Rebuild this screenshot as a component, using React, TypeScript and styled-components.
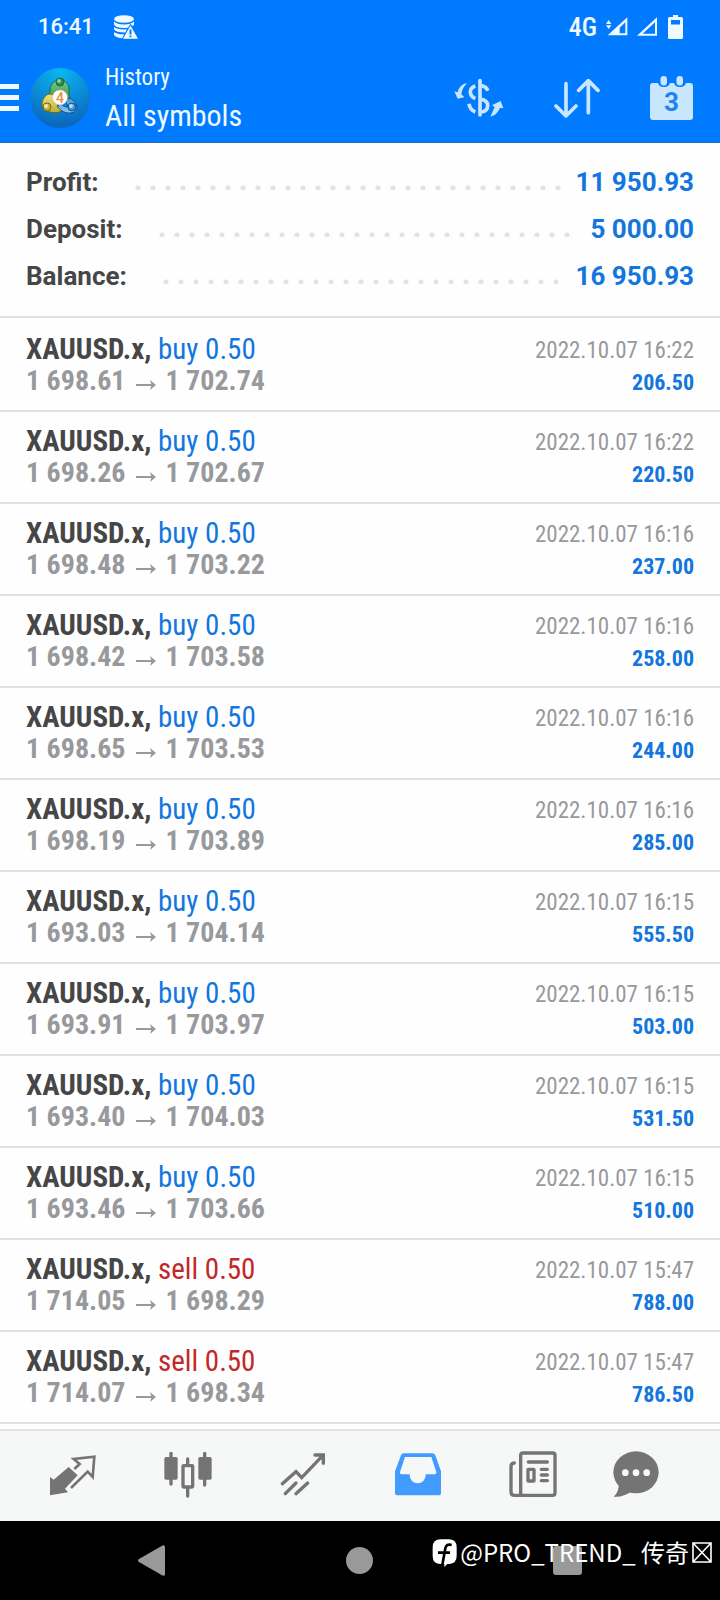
import React from 'react';
import styled, { createGlobalStyle } from 'styled-components';

const Global = createGlobalStyle`
  * { box-sizing: border-box; }
  body { margin: 0; background: #fff; font-family: 'Roboto', sans-serif; }
`;
const condensed = `'Roboto Condensed', 'Liberation Sans Narrow', Roboto, sans-serif`;

const Screen = styled.div`
  min-height: 100vh;
  display: flex;
  flex-direction: column;
  background: #fefefe;
`;

/* ---------- header ---------- */
const Header = styled.header`
  background: #007aff;
  color: #eefaff;
  border-bottom: 1px solid #1a6cc4;
`;
const StatusBar = styled.div`
  display: flex;
  align-items: center;
  height: 54px;
  padding: 0 37px 0 38px;
`;
const Clock = styled.time`
  font-size: 22px;
  font-weight: 500;
  line-height: 28px;
`;
const StatusIcon = styled.svg`
  display: block;
  flex: none;
`;
const StatusLeft = styled.div`
  display: flex;
  align-items: center;
  gap: 20px;
  flex: 1;
`;
const StatusRight = styled.div`
  display: flex;
  align-items: center;
  gap: 9px;
`;
const Network = styled.span`
  font-family: ${condensed};
  font-size: 26px;
  font-weight: 500;
  line-height: 28px;
`;
const TopBar = styled.div`
  display: flex;
  align-items: center;
  height: 88px;
  padding-right: 26px;
`;
const IconButton = styled.button`
  display: block;
  flex: none;
  padding: 0;
  border: 0;
  background: none;
  color: inherit;
  line-height: 0;
`;
const Logo = styled.svg`
  display: block;
  flex: none;
  margin: 0 15px 0 11px;
`;
const Titles = styled.div`
  flex: 1;
  font-family: ${condensed};
`;
const Kicker = styled.div`
  font-size: 23px;
  line-height: 36px;
`;
const Title = styled.h1`
  margin: 0;
  font-size: 30px;
  font-weight: 400;
  line-height: 40px;
`;
const Actions = styled.div`
  display: flex;
  align-items: center;
  gap: 50px;
  color: #c9e6ff;
`;

/* ---------- summary ---------- */
const Summary = styled.dl`
  margin: 0;
  padding: 15px 26px 17px;
  border-bottom: 2px solid #e2e2e2;
`;
const SummaryRow = styled.div`
  display: flex;
  align-items: center;
  height: 47px;
  font-size: 26px;
  font-weight: 700;
`;
const SummaryLabel = styled.dt`
  color: #464646;
`;
const SummaryValue = styled.dd`
  margin: 0;
  color: #1276de;
`;
const Leader = styled.span`
  flex: 1;
  height: 5px;
  margin: 12px 14px 0 36px;
  background: radial-gradient(circle at 3px 3px, #e2e2e4 2px, transparent 3px) 0 0 / 15px 5px repeat-x;
`;

/* ---------- deals ---------- */
const Deals = styled.ul`
  flex: 1;
  margin: 0;
  padding: 2px 0 5px;
  list-style: none;
  font-family: ${condensed};
`;
const Deal = styled.li`
  display: flex;
  justify-content: space-between;
  height: 92px;
  padding: 13px 26px 0;
  border-bottom: 2px solid #e2e2e2;
`;
const Instrument = styled.div`
  font-size: 29px;
  line-height: 32px;
  color: #464646;
  font-weight: 700;
`;
const Side = styled.span<{ $sell: boolean }>`
  font-weight: 400;
  color: ${(p) => (p.$sell ? '#c22828' : '#1276de')};
`;
const Prices = styled.div`
  display: flex;
  align-items: center;
  font-size: 28px;
  line-height: 32px;
  font-weight: 700;
  color: #98999c;
`;
const Arrow = styled.svg`
  display: block;
  margin: 8px 10px 0;
`;
const Right = styled.div`
  padding-top: 2px;
  text-align: right;
`;
const When = styled.time`
  display: block;
  font-size: 23px;
  line-height: 32px;
  color: #98999c;
`;
const Result = styled.div`
  font-size: 22px;
  line-height: 32px;
  font-weight: 700;
  color: #1276de;
`;

/* ---------- bottom ---------- */
const Tabs = styled.nav`
  display: grid;
  grid-template-columns: repeat(5, 5fr) 4fr;
  justify-items: center;
  align-items: center;
  height: 92px;
  padding: 0 38px 3px 15px;
  border-top: 2px solid #e2e2e2;
  background: #f6f7f7;
`;
const Tab = styled(IconButton)<{ $active?: boolean }>`
  color: ${(p) => (p.$active ? '#429bff' : '#747474')};
`;
const SystemNav = styled.div`
  position: relative;
  display: flex;
  align-items: center;
  justify-content: space-between;
  height: 79px;
  padding: 0 138px;
  background: #000;
  color: #999;
`;
const Watermark = styled.div`
  position: absolute;
  right: 8px;
  top: 13px;
  display: flex;
  align-items: center;
  gap: 3px;
  color: #fff;
  font-family: 'Noto Sans CJK SC', sans-serif;
  font-size: 24px;
  line-height: 36px;
  white-space: pre;
`;

const summary = [
  ['Profit:', '11 950.93'],
  ['Deposit:', '5 000.00'],
  ['Balance:', '16 950.93'],
];

const deals = [
  ['buy', '1 698.61', '1 702.74', '16:22', '206.50'],
  ['buy', '1 698.26', '1 702.67', '16:22', '220.50'],
  ['buy', '1 698.48', '1 703.22', '16:16', '237.00'],
  ['buy', '1 698.42', '1 703.58', '16:16', '258.00'],
  ['buy', '1 698.65', '1 703.53', '16:16', '244.00'],
  ['buy', '1 698.19', '1 703.89', '16:16', '285.00'],
  ['buy', '1 693.03', '1 704.14', '16:15', '555.50'],
  ['buy', '1 693.91', '1 703.97', '16:15', '503.00'],
  ['buy', '1 693.40', '1 704.03', '16:15', '531.50'],
  ['buy', '1 693.46', '1 703.66', '16:15', '510.00'],
  ['sell', '1 714.05', '1 698.29', '15:47', '788.00'],
  ['sell', '1 714.07', '1 698.34', '15:47', '786.50'],
];

function AppLogo() {
  return (
    <Logo width="60" height="60" viewBox="0 0 60 60" aria-hidden="true">
      <defs>
        <radialGradient id="disc" cx="50%" cy="5%" r="90%">
          <stop offset="0" stopColor="#08b8f0" />
          <stop offset="0.5" stopColor="#0b90da" />
          <stop offset="1" stopColor="#0c68bd" />
        </radialGradient>
        <linearGradient id="green" x2="0" y2="1">
          <stop offset="0" stopColor="#7cc486" />
          <stop offset="1" stopColor="#3b9a50" />
        </linearGradient>
        <linearGradient id="yellow" x2="0" y2="1">
          <stop offset="0" stopColor="#ece27a" />
          <stop offset="1" stopColor="#bdb02e" />
        </linearGradient>
        <linearGradient id="blue" x2="0" y2="1">
          <stop offset="0" stopColor="#3d9be0" />
          <stop offset="1" stopColor="#8cc8f2" />
        </linearGradient>
      </defs>
      <circle cx="30" cy="30" r="30" fill="url(#disc)" />
      <g strokeWidth="1" strokeLinejoin="round">
        <path d="M30 12c6 0 9 5 9 9 0 3 0 6 1 10l-6 1-4-8-6 5-5-2c0-2 2-4 1-6 1-5 4-9 10-9z" fill="url(#green)" stroke="#1d6a40" />
        <path d="M19 26c3 0 6 1 7 4l2 8 4 5c-4 2-8 2-12 1-5 0-8-3-8-8 0-4 3-9 7-10z" fill="url(#yellow)" stroke="#6a6a22" />
        <path d="M35 32l5-2c4 2 7 6 7 10 0 3-4 5-8 5-5 0-9-3-12-7l4-2c2 2 4 3 7 3z" fill="url(#blue)" stroke="#14508c" />
      </g>
      <circle cx="30" cy="14" r="4" fill="#2c8b45" stroke="#1d6a40" />
      <circle cx="29" cy="13" r="2" fill="#8fd39a" />
      <circle cx="17" cy="39" r="4" fill="#c2b534" stroke="#6a6a22" />
      <circle cx="16" cy="38" r="2" fill="#f2ecaa" />
      <circle cx="42" cy="39" r="4" fill="#3c93d8" stroke="#14508c" />
      <circle cx="41" cy="38" r="2" fill="#b8e0fa" />
      <circle cx="30" cy="29.500" r="7.500" fill="#fff" stroke="#c9b9a8" strokeWidth="0.600" />
      <text x="30" y="34.500" textAnchor="middle" fontFamily="Roboto" fontSize="14" fontWeight="500" fill="#ee8a3c">4</text>
    </Logo>
  );
}

export default function App() {
  return (
    <Screen>
      <Global />
      <Header>
        <StatusBar>
          <StatusLeft>
            <Clock>16:41</Clock>
            <StatusIcon width="24" height="24" viewBox="0 0 24 24" aria-label="Storage warning">
              <g fill="currentColor">
                <ellipse cx="10" cy="4" rx="10" ry="3.800" />
                <path d="M0 6.500Q3 9.500 10 9.500T20 6.500V10L18 11 16.500 8.500 14 12.700Q2 14 0 9.500zM0 12Q3 14.800 13 14.300L11.300 17.500Q2 17.500 0 14.500zM0 17Q3 19.300 10.300 19.300L8 23.300Q1 22.500 0 19.800z" />
                <path fillRule="evenodd" d="M16.500 10.500 24 23.700H9zM15.500 14.500v5h2v-5zm0 6v1.800h2v-1.800z" />
              </g>
            </StatusIcon>
          </StatusLeft>
          <StatusRight>
            <Network>4G</Network>
            <StatusIcon width="22" height="20" viewBox="525 52 66 60" aria-label="Mobile signal 1">
              <path fill="currentColor" d="M525 73l8-12 8 12zM525 77h16l-8 11z" />
              <path fill="currentColor" fillRule="evenodd" d="M530 107 589 53v54zM566 84v17h17V68z" />
            </StatusIcon>
            <StatusIcon width="22" height="20" viewBox="616 52 66 60" aria-label="Mobile signal 2">
              <path fill="currentColor" fillRule="evenodd" d="M616 108 676 53v55zM633 102h37V68z" />
            </StatusIcon>
            <StatusIcon width="15" height="24" viewBox="0 0 15 24" aria-label="Battery">
              <path fill="currentColor" fillRule="evenodd" d="M5 0h5v2h3.500Q15 2 15 3.500v19q0 1.500-1.500 1.500h-12Q0 24 0 22.500v-19Q0 2 1.500 2H5zM3 5v4.500h9V5z" />
            </StatusIcon>
          </StatusRight>
        </StatusBar>
        <TopBar>
          <IconButton aria-label="Menu">
            <svg width="19" height="28" viewBox="0 0 19 28"><path fill="currentColor" d="M0 0h19v5H0zM0 11h19v5H0zM0 22h19v5H0z" /></svg>
          </IconButton>
          <AppLogo />
          <Titles>
            <Kicker>History</Kicker>
            <Title>All symbols</Title>
          </Titles>
          <Actions>
            <IconButton aria-label="Symbols">
              <svg width="50" height="40" viewBox="22 21 150 120">
                <g fill="none" stroke="currentColor" strokeWidth="11">
                  <path strokeLinecap="round" d="M100 29V132" />
                  <path d="M86 45Q71 50 71 63 71 76 86 83M104 44Q118 46 124 59M104 85Q123 88 123 104 123 120 104 123M67 98Q70 117 86 123" />
                </g>
                <path fill="currentColor" d="M62 36Q38 40 33 64L23 61 33 83 53 79 44 70Q46 50 62 36zM131 137Q138 122 144 108L136 103 162 90 170 112 160 110Q152 132 131 137z" />
              </svg>
            </IconButton>
            <IconButton aria-label="Sort">
              <svg width="46" height="40" viewBox="362 232 138 120" fill="none" stroke="currentColor" strokeWidth="11" strokeLinecap="round" strokeLinejoin="round">
                <path d="M398 249V345M368 316l30 30 30-30M465 336V240M436 269l29-29 29 29" />
              </svg>
            </IconButton>
            <IconButton aria-label="Period">
              <svg width="44" height="45" viewBox="0 0 44 45">
                <path fill="currentColor" d="M3 7h5q1 4 6 4t6-4h4q1 4 6 4t6-4h4q3 0 3 3v31q0 3-3 3H3q-3 0-3-3V10q0-3 3-3z" />
                <rect x="10.500" y="0" width="6.500" height="9.500" rx="3.200" fill="currentColor" />
                <rect x="26.500" y="0" width="6.500" height="9.500" rx="3.200" fill="currentColor" />
                <text x="21.500" y="35" textAnchor="middle" fontFamily="Roboto" fontSize="26" fontWeight="700" fill="#1e82f0">3</text>
              </svg>
            </IconButton>
          </Actions>
        </TopBar>
      </Header>

      <Summary>
        {summary.map(([label, value]) => (
          <SummaryRow key={label}>
            <SummaryLabel>{label}</SummaryLabel>
            <Leader aria-hidden="true" />
            <SummaryValue>{value}</SummaryValue>
          </SummaryRow>
        ))}
      </Summary>

      <Deals>
        {deals.map(([side, open, close, time, result]) => (
          <Deal key={open}>
            <div>
              <Instrument>
                XAUUSD.x, <Side $sell={side === 'sell'}>{side} 0.50</Side>
              </Instrument>
              <Prices>
                {open}
                <Arrow width="20" height="10" viewBox="0 0 20 10" aria-label="to">
                  <path fill="none" stroke="currentColor" strokeWidth="2" d="M0 5h18" />
                  <path fill="currentColor" d="M14 0l6 5-6 5 1.500-5z" />
                </Arrow>
                {close}
              </Prices>
            </div>
            <Right>
              <When>2022.10.07 {time}</When>
              <Result>{result}</Result>
            </Right>
          </Deal>
        ))}
      </Deals>

      <Tabs>
        <Tab aria-label="Quotes">
          <svg width="48" height="48" viewBox="146 92 144 144">
            <path fill="currentColor" d="M149 170L160 178 205 140 232 165 194 205 203 216 149 225z" />
            <path fill="none" stroke="currentColor" strokeWidth="8" d="M222 146L238 131 220 116 282 109 277 170 262 154 212 203" />
          </svg>
        </Tab>
        <Tab aria-label="Charts">
          <svg width="48" height="48" viewBox="491 92 144 144" fill="currentColor">
            <rect x="492" y="110" width="40" height="68" rx="5" />
            <rect x="507" y="94" width="10" height="102" rx="5" />
            <rect x="594" y="110" width="40" height="68" rx="5" />
            <rect x="608" y="94" width="10" height="105" rx="5" />
            <rect x="548" y="136" width="29" height="64" rx="2" fill="none" stroke="currentColor" strokeWidth="10" />
            <path fill="none" stroke="currentColor" strokeWidth="10" strokeLinecap="round" d="M562 116v18M562 204v23" />
          </svg>
        </Tab>
        <Tab aria-label="Trade">
          <svg width="48" height="48" viewBox="835 92 144 144" fill="none" stroke="currentColor" strokeWidth="10" strokeLinecap="round">
            <path d="M845 190L886 154 903 172 966 106M943 104H968V129M854 220L886 188M886 220L921 188" />
          </svg>
        </Tab>
        <Tab aria-label="History" aria-current="page" $active>
          <svg width="48" height="48" viewBox="101 92 144 144">
            <path fill="currentColor" fillRule="evenodd" d="M130 99h86q6 0 9 6l17 48v66q0 6-6 6H110q-6 0-6-6v-66l18-48q2-6 8-6zM134 110L119 155q-1 7 5 7H148v3a24 24 0 0 0 48 0v-3h27q6 0 5-7L213 110z" />
          </svg>
        </Tab>
        <Tab aria-label="News">
          <svg width="48" height="48" viewBox="447 92 144 144" fill="none" stroke="currentColor" strokeWidth="10" strokeLinecap="round">
            <rect x="482" y="98" width="103" height="127" rx="7" />
            <path d="M463 128q-10 1-10 10v77q0 10 10 10h20M505 125h57M544 147h18M544 164h18M544 181h18" />
            <rect x="504" y="147" width="18" height="35" rx="1" />
          </svg>
        </Tab>
        <Tab aria-label="Messages">
          <svg width="48" height="48" viewBox="756 92 144 144">
            <ellipse cx="828" cy="156" rx="68" ry="63" fill="currentColor" />
            <path fill="currentColor" d="M776 188q2 26-15 41 28 3 54-16z" />
            <g fill="#f6f7f7">
              <circle cx="796" cy="157" r="10" />
              <circle cx="828" cy="157" r="10" />
              <circle cx="860" cy="157" r="10" />
            </g>
          </svg>
        </Tab>
      </Tabs>
      <SystemNav>
        <IconButton aria-label="Back">
          <svg width="27" height="31" viewBox="0 0 27 31"><path fill="currentColor" d="M0 15.500Q0 14.500 1 14L24.500.500Q27-.500 27 2V29q0 2.500-2.500 1.500L1 17Q0 16.500 0 15.500z" /></svg>
        </IconButton>
        <IconButton aria-label="Home">
          <svg width="27" height="27" viewBox="0 0 27 27"><circle cx="13.500" cy="13.500" r="13.500" fill="currentColor" /></svg>
        </IconButton>
        <IconButton aria-label="Recent apps">
          <svg width="29" height="29" viewBox="0 0 29 29"><rect width="29" height="29" rx="3" fill="currentColor" /></svg>
        </IconButton>
        <Watermark>
          <StatusIcon width="25" height="29" viewBox="214 362 75 87" aria-hidden="true">
            <path fill="currentColor" d="M240 366h24q24 0 24 24v26q0 22-22 24h-6l-9 9v-9h-11q-24 0-24-24v-26q0-24 24-24z" />
            <path fill="none" stroke="#000" strokeWidth="8" d="M273 383q-16-5-19 10l-9 50M232 406h36" />
          </StatusIcon>
          <span>@PRO_TREND_ 传奇</span>
          <StatusIcon width="20" height="21" viewBox="0 0 20 21" aria-hidden="true">
            <path fill="none" stroke="currentColor" strokeWidth="1.600" d="M1 1h18v19H1zM1 1l18 19M19 1L1 20" />
          </StatusIcon>
        </Watermark>
      </SystemNav>
    </Screen>
  );
}
